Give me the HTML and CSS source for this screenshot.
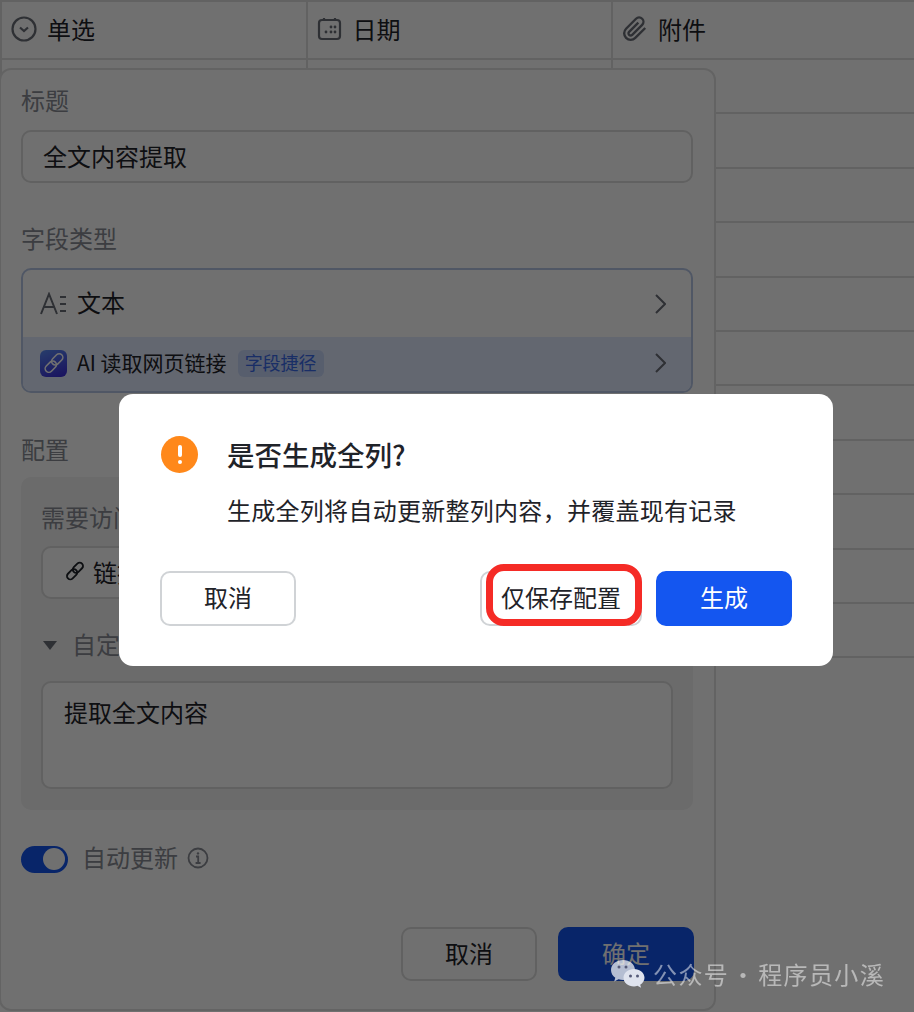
FILE: index.html
```html
<!DOCTYPE html>
<html lang="zh-CN">
<head>
    <meta charset="UTF-8">
    <title>是否生成全列</title>
    <link rel="stylesheet" href="styles.css">
</head>
<body>
    <div class="table">
        <div class="row head">
            <div class="cell">
                <svg class="col-icon" width="26" height="26" viewBox="0 0 26 26"><circle cx="13" cy="13" r="11.5"/><polyline points="9,11.5 13,15 17,11.5"/></svg>
                单选
            </div>
            <div class="cell">
                <svg class="col-icon" width="26" height="26" viewBox="0 0 26 26"><rect x="2" y="4" width="21" height="19" rx="3"/><path d="M7 2v3M18 2v3"/><g class="dots"><circle cx="14" cy="11" r="1.4"/><circle cx="18" cy="11" r="1.4"/><circle cx="9" cy="16" r="1.4"/><circle cx="14" cy="16" r="1.4"/><circle cx="18" cy="16" r="1.4"/></g></svg>
                日期
            </div>
            <div class="cell">
                <svg class="col-icon" width="26" height="26" viewBox="0 0 24 24"><path d="M21.44 11.05l-9.19 9.19a6 6 0 0 1-8.49-8.49l9.19-9.19a4 4 0 0 1 5.66 5.66l-9.2 9.19a2 2 0 0 1-2.83-2.83l8.49-8.48"/></svg>
                附件
            </div>
        </div>
        <div class="row"><div class="cell"></div><div class="cell"></div><div class="cell"></div></div>
        <div class="row"><div class="cell"></div><div class="cell"></div><div class="cell"></div></div>
        <div class="row"><div class="cell"></div><div class="cell"></div><div class="cell"></div></div>
        <div class="row"><div class="cell"></div><div class="cell"></div><div class="cell"></div></div>
        <div class="row"><div class="cell"></div><div class="cell"></div><div class="cell"></div></div>
        <div class="row"><div class="cell"></div><div class="cell"></div><div class="cell"></div></div>
        <div class="row"><div class="cell"></div><div class="cell"></div><div class="cell"></div></div>
        <div class="row"><div class="cell"></div><div class="cell"></div><div class="cell"></div></div>
        <div class="row"><div class="cell"></div><div class="cell"></div><div class="cell"></div></div>
        <div class="row"><div class="cell"></div><div class="cell"></div><div class="cell"></div></div>
        <div class="row"><div class="cell"></div><div class="cell"></div><div class="cell"></div></div>
    </div>

    <div class="panel">
        <div class="label">标题</div>
        <div class="field">全文内容提取</div>

        <div class="label label-type">字段类型</div>
        <div class="type-box">
            <div class="type-row">
                <svg class="type-icon" width="26" height="24" viewBox="0 0 26 24"><path d="M1 22L9 2l8 20M4 15h10M20 5h6M20 12h6M20 19h6"/></svg>
                <span class="type-text">文本</span>
                <svg class="chevron" width="12" height="20" viewBox="0 0 12 20"><polyline points="2,1 11,10 2,19"/></svg>
            </div>
            <div class="type-row shortcut">
                <span class="ai-icon">
                    <svg width="22" height="22" viewBox="0 0 24 24"><rect x="11.500" y="1" width="8" height="14" rx="4" transform="rotate(45 15.500 8)"/><rect x="4.500" y="9" width="8" height="14" rx="4" transform="rotate(45 8.500 16)"/></svg>
                </span>
                <span class="ai-text">AI 读取网页链接</span>
                <span class="tag">字段捷径</span>
                <svg class="chevron" width="12" height="20" viewBox="0 0 12 20"><polyline points="2,1 11,10 2,19"/></svg>
            </div>
        </div>

        <div class="label label-config">配置</div>
        <div class="config">
            <div class="label">需要访问的</div>
            <div class="field link-field">
                <svg class="link-icon" width="20" height="22" viewBox="0 0 24 24"><rect x="11.500" y="1" width="8" height="14" rx="4" transform="rotate(45 15.500 8)"/><rect x="4.500" y="9" width="8" height="14" rx="4" transform="rotate(45 8.500 16)"/></svg>
                链接
            </div>
            <div class="custom">
                <span class="triangle"></span>
                <span class="label">自定义要求</span>
            </div>
            <div class="textarea">提取全文内容</div>
        </div>

        <div class="auto">
            <span class="toggle"><span class="knob"></span></span>
            <span class="label">自动更新</span>
            <svg class="info" width="22" height="22" viewBox="0 0 22 22"><circle cx="11" cy="11" r="9.500"/><path d="M9 9.500h2.200V16M8.600 16h5"/><circle class="info-dot" cx="11" cy="6.400" r="1.200"/></svg>
        </div>

        <div class="panel-foot">
            <button class="btn">取消</button>
            <button class="btn primary">确定</button>
        </div>
    </div>

    <div class="mask"></div>

    <div class="modal">
        <div class="modal-head">
            <span class="warn"><span class="warn-bar"></span><span class="warn-dot"></span></span>
            <h2>是否生成全列?</h2>
        </div>
        <p>生成全列将自动更新整列内容，并覆盖现有记录</p>
        <div class="modal-foot">
            <button class="btn">取消</button>
            <div class="modal-actions">
                <button class="btn save"><span class="highlight"></span><span class="save-text">仅保存配置</span></button>
                <button class="btn primary">生成</button>
            </div>
        </div>
    </div>

    <div class="watermark">
        <svg width="36" height="30" viewBox="0 0 36 30">
            <path class="bubble-back" d="M13 1C6.500 1 1 5.200 1 11c0 3.200 1.700 5.900 4.300 7.800L4.200 22.500l4.300-2.300c1.500.5 3 .8 4.500.8 6.500 0 12-4.300 12-10S19.500 1 13 1z"/>
            <path class="bubble-front" d="M24 10c-5.700 0-10.500 3.800-10.500 8.700S18.300 27.400 24 27.400c1.200 0 2.400-.2 3.500-.6l3.600 2-.9-3.100c2.500-1.600 4.300-4.100 4.300-7 0-4.900-4.800-8.700-10.500-8.700z"/>
            <circle class="eye" cx="20.500" cy="17" r="1.500"/><circle class="eye" cx="27.500" cy="17" r="1.500"/>
            <circle class="eye" cx="9" cy="8" r="1.500"/><circle class="eye" cx="16" cy="8" r="1.500"/>
        </svg>
        <span class="watermark-text">公众号 · 程序员小溪</span>
    </div>
</body>
</html>
```

FILE: styles.css
```css
* {
    box-sizing: border-box;
}
html, body {
    height: 100%;
}
body {
    margin: 0;
    overflow: hidden;
    background: #fff;
    color: #1f2329;
    font-family: "Noto Sans CJK SC", "Noto Sans", sans-serif;
    font-size: 24px;
}

/* table behind the panel */
.table {
    border-top: 2px solid #e0e0e0;
}
.row {
    display: flex;
    height: 54.4px;
    border-bottom: 2px solid #e0e0e0;
}
.head {
    height: 58px;
}
.cell {
    display: flex;
    align-items: center;
    width: 305.5px;
    padding: 0 0 3px 9px;
    border-left: 2px solid #e0e0e0;
}
.cell:last-child {
    flex: 1;
}
.col-icon {
    margin-right: 10px;
    fill: none;
    stroke: #6a6e77;
    stroke-width: 2.200;
}
.dots {
    fill: #6a6e77;
    stroke: none;
}

/* side panel */
.panel {
    position: absolute;
    left: -1px;
    top: 68px;
    width: 717px;
    height: 943px;
    padding: 15px 21px 0 20px;
    background: #fff;
    border: 2px solid #e2e2e2;
    border-radius: 12px;
}
.label {
    height: 34px;
    margin-bottom: 11px;
    line-height: 30px;
    color: #888c94;
}
.label-type {
    margin-top: 40px;
}
.label-config {
    margin-top: 41px;
    margin-bottom: 9px;
}
.field {
    display: flex;
    align-items: center;
    height: 53px;
    padding: 0 0 3px 20px;
    border: 2px solid #dcdcdc;
    border-radius: 10px;
}
.type-box {
    height: 125px;
    border: 2px solid #b6c6e6;
    border-radius: 10px;
    overflow: hidden;
}
.type-row {
    display: flex;
    align-items: center;
    height: 67px;
    padding: 0 25px 0 17px;
}
.type-icon {
    margin-right: 11px;
    fill: none;
    stroke: #6a6e77;
    stroke-width: 2;
}
.type-text {
    padding-bottom: 4px;
}
.chevron {
    margin-left: auto;
    fill: none;
    stroke: #6a6e77;
    stroke-width: 2;
}
.shortcut {
    height: 56px;
    padding-bottom: 4px;
    background: #e2eaff;
}
.ai-icon {
    display: flex;
    align-items: center;
    justify-content: center;
    width: 27px;
    height: 27px;
    margin-right: 10px;
    border-radius: 6px;
    background: linear-gradient(160deg, #5a8cf5, #3a28d8);
}
.ai-icon svg {
    fill: none;
    stroke: #fff;
    stroke-width: 1.700;
}
.ai-text {
    font-size: 21px;
    padding-bottom: 2px;
}
.tag {
    margin-left: 11px;
    padding: 0 7px;
    height: 27px;
    line-height: 25px;
    font-size: 18px;
    color: #3a6ae8;
    background: #c6d6f8;
    border-radius: 6px;
}

.config {
    height: 333px;
    padding: 25px 20px 0;
    background: #f3f3f3;
    border-radius: 10px;
}
.config .label {
    margin-bottom: 10px;
}
.link-field {
    width: 400px;
    padding-left: 22px;
    background: #fff;
}
.link-icon {
    margin-right: 8px;
    fill: none;
    stroke: #1f2329;
    stroke-width: 2.200;
}
.custom {
    display: flex;
    align-items: center;
    gap: 15px;
    height: 34px;
    margin: 29px 0 19px;
    padding-left: 2px;
}
.custom .label {
    margin: 0;
    line-height: 32px;
}
.triangle {
    width: 0;
    height: 0;
    border-left: 7px solid transparent;
    border-right: 7px solid transparent;
    border-top: 9px solid #6a6e77;
}
.textarea {
    height: 108px;
    padding: 11px 21px;
    background: #fff;
    border: 2px solid #dcdcdc;
    border-radius: 10px;
}

.auto {
    display: flex;
    align-items: center;
    margin-top: 35px;
    height: 28px;
}
.auto .label {
    margin: 0 0 0 14px;
}
.toggle {
    display: flex;
    align-items: center;
    justify-content: flex-end;
    width: 47px;
    height: 27px;
    padding-right: 3px;
    background: #1456f0;
    border-radius: 14px;
}
.knob {
    width: 22px;
    height: 22px;
    background: #fff;
    border-radius: 50%;
}
.info {
    margin: -3px 0 0 9px;
    fill: none;
    stroke: #888c94;
    stroke-width: 1.800;
}
.info-dot {
    fill: #888c94;
    stroke: none;
}
.panel-foot {
    display: flex;
    justify-content: flex-end;
    gap: 21px;
    margin: 54px -1px 0 0;
}

.btn {
    width: 136px;
    height: 54px;
    padding: 0 0 4px;
    color: #1f2329;
    background: #fff;
    border: 2px solid #d0d3d6;
    border-radius: 10px;
    font: inherit;
}
.panel .btn {
    border-color: #dcdcdc;
}
.panel .primary,
.primary {
    color: #fff;
    background: #1456f0;
    border-color: #1456f0;
}

.mask {
    position: fixed;
    left: 0;
    top: 0;
    right: 0;
    bottom: 0;
    background: rgba(0, 0, 0, 0.56);
}

/* dialog on top */
.modal {
    position: absolute;
    left: 119px;
    top: 394px;
    width: 714px;
    height: 272px;
    padding: 42px 41px 0;
    background: #fff;
    border-radius: 14px;
}
.modal-head {
    display: flex;
    align-items: center;
    gap: 29px;
    height: 37px;
}
.modal-head h2 {
    margin: -2px 0 0;
    font-size: 27.5px;
    font-weight: 500;
    line-height: 40px;
}
.warn {
    display: flex;
    flex-direction: column;
    align-items: center;
    justify-content: center;
    gap: 3px;
    width: 37px;
    height: 37px;
    margin-left: 1px;
    background: #ff881a;
    border-radius: 50%;
}
.warn-bar {
    width: 4px;
    height: 12px;
    background: #fff;
    border-radius: 2px;
}
.warn-dot {
    width: 4px;
    height: 4px;
    background: #fff;
    border-radius: 50%;
}
.modal p {
    margin: 20px 0 0 67px;
    line-height: 34px;
    letter-spacing: 0.28px;
}
.modal-foot {
    display: flex;
    justify-content: space-between;
    margin-top: 44px;
}
.modal-actions {
    display: flex;
    gap: 14px;
}
.modal-foot .btn {
    height: 55px;
}
.save {
    position: relative;
    width: 162px !important;
}
.highlight {
    position: absolute;
    left: 4px;
    top: -9px;
    right: -2px;
    bottom: -2px;
    background: #fff;
    border: 7px solid #f52b26;
    border-radius: 18px;
}
.save-text {
    position: relative;
}

.watermark {
    position: absolute;
    left: 610px;
    top: 959px;
    display: flex;
    align-items: center;
    gap: 7px;
    color: rgba(255, 255, 255, 0.5);
}
.watermark-text {
    margin-bottom: 1px;
    line-height: 24px;
    letter-spacing: 1.400px;
    word-spacing: -5px;
}
.bubble-back {
    fill: rgba(255, 255, 255, 0.7);
}
.bubble-front {
    fill: #dfe3ee;
}
.eye {
    fill: #555a78;
}
```
